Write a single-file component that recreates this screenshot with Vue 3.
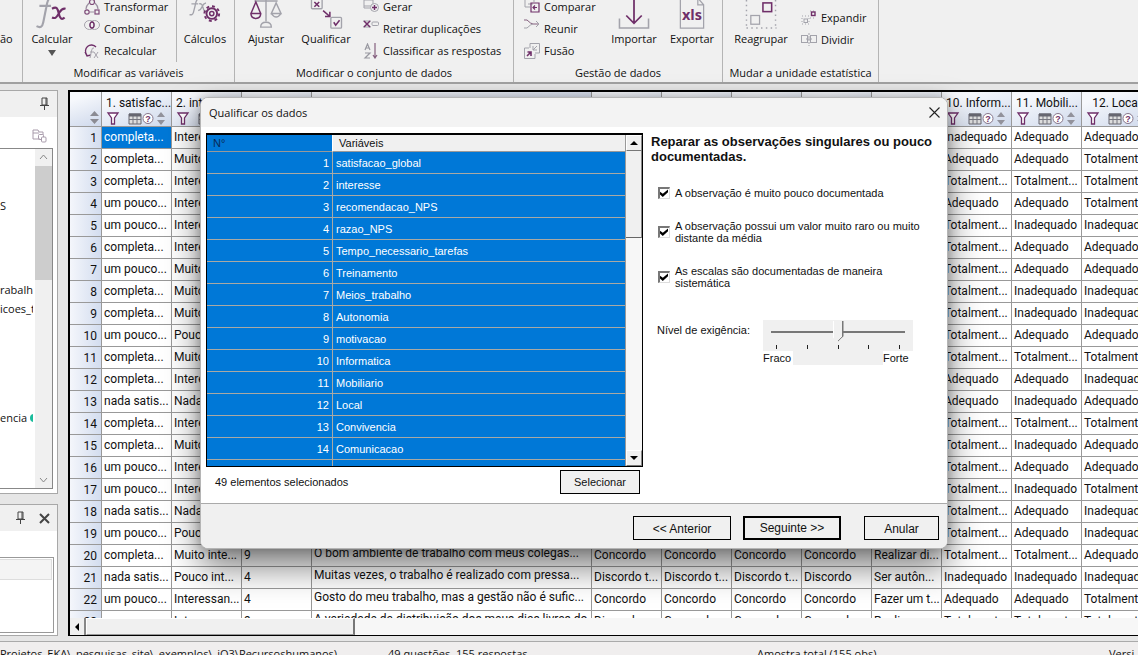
<script setup>
import { ref } from 'vue'

const I = 'Inadequado'
const A = 'Adequado'
const T = 'Totalment...'
const full = 'completa...'
const some = 'um pouco...'
const none = 'nada satis...'
const very = 'Muito inte...'
const int = 'Interessan...'
const little = 'Pouco int...'
const nil = 'Nada inter...'

const columns = [
  { title: '1. satisfac...', w: 'std' },
  { title: '2. interesse', w: 'std' },
  { title: '3. recom...', w: 'std' },
  { title: '4. razao_NPS', w: 'wide' },
  { title: '5. Tempo...', w: 'std' },
  { title: '6. Treina...', w: 'std' },
  { title: '7. Meios...', w: 'std' },
  { title: '8. Auton...', w: 'std' },
  { title: '9. motiva...', w: 'std' },
  { title: '10. Inform...', w: 'std' },
  { title: '11. Mobili...', w: 'std' },
  { title: '12. Local', w: 'std' }
]

const mid = ['', '', '', '', '', '', '']
const C = 'Concordo'
const rows = [
  [full, int, ...mid, I, A, A],
  [full, very, ...mid, A, A, T],
  [full, int, ...mid, T, T, T],
  [some, int, ...mid, A, A, T],
  [some, int, ...mid, T, I, I],
  [full, int, ...mid, T, A, A],
  [some, very, ...mid, T, A, A],
  [full, very, ...mid, T, I, I],
  [full, very, ...mid, T, I, I],
  [some, little, ...mid, T, A, A],
  [full, very, ...mid, T, T, T],
  [full, int, ...mid, A, A, I],
  [none, nil, ...mid, A, I, A],
  [full, int, ...mid, T, T, T],
  [full, very, ...mid, T, I, A],
  [some, int, ...mid, T, A, A],
  [some, int, ...mid, T, I, T],
  [none, nil, ...mid, T, A, I],
  [some, little, ...mid, T, A, I],
  [full, very, '9', 'O bom ambiente de trabalho com meus colegas...', C, C, C, C, 'Realizar di...', T, T, A],
  [none, little, '4', 'Muitas vezes, o trabalho é realizado com pressa...', 'Discordo t...', 'Discordo t...', 'Discordo t...', 'Discordo', 'Ser autôn...', I, I, I],
  [some, int, '4', 'Gosto do meu trabalho, mas a gestão não é sufic...', C, C, C, C, 'Fazer um t...', A, A, T],
  [some, int, '9', 'A variedade da distribuição dos meus dias livres do...', 'Discordo', C, C, C, 'Realizar', T, T, T]
]

const variables = [
  'satisfacao_global', 'interesse', 'recomendacao_NPS', 'razao_NPS', 'Tempo_necessario_tarefas',
  'Treinamento', 'Meios_trabalho', 'Autonomia', 'motivacao', 'Informatica', 'Mobiliario',
  'Local', 'Convivencia', 'Comunicacao', ''
]

const checks = ref([
  { text: 'A observação é muito pouco documentada', on: true },
  { text: 'A observação possui um valor muito raro ou muito distante da média', on: true },
  { text: 'As escalas são documentadas de maneira sistemática', on: true }
])
const level = ref(3)
</script>

<template>
  <div class="app">
    <header class="ribbon">
      <section class="group g-first">
        <div class="tools"><button class="big cut">ão</button></div>
      </section>
      <section class="group g-vars">
        <div class="tools">
          <button class="big w58">
            <svg width="40" height="32" viewBox="0 0 40 32" fill="none">
              <path d="M22-2C16-4 15 2 14 8l-3 15c-1 5-3 6-7 4M7 6h12" stroke="#a3a3ab" stroke-width="2.2" />
              <path d="M20 9c5-3 6 0 7 5s3 7 6 4M34 9c-4-1-5 2-7 5s-3 6-7 4" stroke="#6f2f69" stroke-width="2.2" />
            </svg>
            <span>Calcular</span><i class="caret"></i>
          </button>
          <div class="stack s-vars">
            <button><svg width="16" height="18" viewBox="0 0 16 18" fill="none" stroke="#7d4a78" stroke-width="1.2"><circle cx="8" cy="4" r="2.5" /><circle cx="3" cy="14" r="2.2" /><rect x="11" y="12" width="4" height="4" /><path d="M5 5Q2 8 2 11M11 5q3 3 3 6M6 14h4" stroke="#9b8fa0" /></svg>Transformar</button>
            <button><svg class="up" width="16" height="16" viewBox="0 0 16 16" fill="none"><ellipse cx="5.5" cy="7" rx="5" ry="4.5" stroke="#a6a3ac" /><ellipse cx="10.5" cy="7" rx="5" ry="4.5" stroke="#a6a3ac" /><ellipse cx="8" cy="7" rx="2" ry="3" stroke="#6f2f69" stroke-width="1.3" /></svg>Combinar</button>
            <button><svg width="16" height="16" viewBox="0 0 16 16" fill="none"><path d="M3 12A5.5 5.5 0 1 1 12 4M1 9l2 4 4-1" stroke="#6f2f69" stroke-width="1.3" /><path d="M10 5q-2-1-2.5 3L6 15M6 9h4M10 9l4 6M14 9l-4 6" stroke="#a6a3ac" /></svg>Recalcular</button>
          </div>
          <div class="rule"></div>
          <button class="big w56">
            <svg width="34" height="32" viewBox="0 0 34 32" fill="none">
              <path d="M12-2Q8-2 7 5L5 13q-1 3-4 2M3 4h7M11 4q3-1 4 4t4 3M18 3q-3 1-4 4t-4 4" stroke="#a3a3ab" stroke-width="1.4" />
              <g stroke="#6f2f69"><circle cx="24" cy="14" r="5.5" stroke-width="2" /><circle cx="24" cy="14" r="2.2" stroke-width="1.5" /><circle cx="24" cy="14" r="7.6" stroke-width="2" stroke-dasharray="3 2.97" /></g>
            </svg>
            <span>Cálculos</span>
          </button>
        </div>
        <h2>Modificar as variáveis</h2>
      </section>
      <section class="group g-set">
        <div class="tools">
          <button class="big w62">
            <svg width="34" height="32" viewBox="0 0 34 32" fill="none" stroke="#a3a3ab" stroke-width="1.5">
              <path d="M5 1h24M17 0v22M11.500 28q0-5 5.500-5t5.500 5zM27.500 3l-5 11h10zM22.500 14q5 7 10 0" />
              <path d="M6.500 2l-5 12h10zM1.500 14q0 5 5 5t5-5z" stroke="#6f2f69" />
            </svg>
            <span>Ajustar</span>
          </button>
          <button class="big w58">
            <svg width="34" height="32" viewBox="0 0 34 32" fill="none" stroke="#a3a3ab" stroke-width="1.4">
              <rect x="2" y="-2" width="11" height="11" rx="1" /><rect x="22" y="18" width="11" height="11" rx="1" />
              <path d="M5 2l5 5M10 2l-5 5M14 11l7 6M16 17h5v-5M25 23l2 3 4-5" stroke="#6f2f69" stroke-width="1.6" />
            </svg>
            <span>Qualificar</span>
          </button>
          <div class="stack s-set">
            <button><svg width="16" height="16" viewBox="0 0 16 16" fill="none" stroke="#a3a3ab"><path d="M1 1h9v6H1zM1 7v2h6" /><circle cx="11.5" cy="8.5" r="4" fill="#f0f0f0" /><path d="M9 8.500h5M11.500 6v5" stroke="#6f2f69" stroke-width="1.4" /></svg>Gerar</button>
            <button><svg class="up" width="16" height="16" viewBox="0 0 16 16" fill="none"><path d="M0 3h8M0 9h8" stroke="#a3a3ab" /><path d="M1 3l6 6M7 3l-6 6" stroke="#6f2f69" stroke-width="1.5" /><rect x="9" y="4" width="6.5" height="3.5" rx="1" stroke="#a3a3ab" /></svg>Retirar duplicações</button>
            <button><svg width="16" height="16" viewBox="0 0 16 16" fill="none" stroke="#9898a0" stroke-width="1.2"><path d="M2 7l2.500-6L7 7M3 5h3M2 10h5l-5 5h5" /><path d="M12 0v14M10 12l2 3 2-3" stroke="#85607f" /></svg>Classificar as respostas</button>
          </div>
        </div>
        <h2>Modificar o conjunto de dados</h2>
      </section>
      <section class="group g-data">
        <div class="tools">
          <div class="stack s-data">
            <button><svg width="16" height="18" viewBox="0 0 16 18" fill="none" stroke="#a3a3ab"><path d="M6 9H1V1h9v3M4 6h5" /><path d="M7 5h8v9H7zM13 9.500H9M11 7.500l-2 2 2 2" stroke="#6f2f69" stroke-width="1.2" /></svg>Comparar</button>
            <button><svg class="up" width="16" height="16" viewBox="0 0 16 16" fill="none" stroke="#85607f"><path d="M0 2h3q4 4 6 4h6" /><path d="M0 10h3q4-4 6-4M12 3l3 3-3 3" stroke="#a3a3ab" /></svg>Reunir</button>
            <button><svg width="16" height="16" viewBox="0 0 16 16" fill="none" stroke="#a3a3ab"><path d="M6 5V.5h9.500V10H11M11 11v4.500H.5V5H5M13 3L9 7M9 3v4h4" /><path d="M3 13l4-4M3.500 9H7v4" stroke="#6f2f69" stroke-width="1.6" /></svg>Fusão</button>
          </div>
          <button class="big w58">
            <svg width="34" height="32" viewBox="0 0 34 32" fill="none"><path d="M2 19v10h30V19" stroke="#a3a3ab" stroke-width="1.6" /><path d="M17-2v25M9 16l8 8 8-8" stroke="#6f2f69" stroke-width="1.8" /></svg>
            <span>Importar</span>
          </button>
          <button class="big w58">
            <svg width="34" height="32" viewBox="0 0 34 32" fill="none"><path d="M5-2v31h24V5l-6-7M23-2v7h6" stroke="#a3a3ab" stroke-width="1.3" /><text class="xls" x="17" y="21" text-anchor="middle">xls</text></svg>
            <span>Exportar</span>
          </button>
        </div>
        <h2>Gestão de dados</h2>
      </section>
      <section class="group g-unit">
        <div class="tools">
          <button class="big w76">
            <svg width="34" height="32" viewBox="0 0 34 32" fill="none"><path d="M2 0v29M2 29h31M32 0v29" stroke="#a3a3ab" stroke-width="1.5" stroke-dasharray="1.5 3.5" /><rect x="6.5" y="16" width="9" height="9" stroke="#a3a3ab" stroke-width="1.3" /><rect x="19" y="3" width="9" height="9" stroke="#6f2f69" stroke-width="1.6" /></svg>
            <span>Reagrupar</span>
          </button>
          <div class="stack s-unit">
            <button><svg width="16" height="16" viewBox="0 0 16 16" fill="none" stroke="#a3a3ab"><path d="M1 6h7M1 14h7M1 8v6M8 8v6M9 1h6M9 8h6" stroke-dasharray="1 2" /><rect x="3" y="9" width="3.5" height="3.5" /><rect x="10.5" y="2" width="3.5" height="3.5" stroke="#6f2f69" stroke-width="1.4" /></svg>Expandir</button>
            <button><svg width="16" height="16" viewBox="0 0 16 16" fill="none" stroke="#a3a3ab"><rect x="0.5" y="3.5" width="6" height="7" /><rect x="9.5" y="3.5" width="6" height="7" /><path d="M8 1v13" stroke-dasharray="2 1" /><path d="M5 7h6" /></svg>Dividir</button>
          </div>
        </div>
        <h2>Mudar a unidade estatística</h2>
      </section>
    </header>

    <main class="work">
      <aside class="side">
        <section class="panel p-top">
          <div class="p-head">
            <svg width="11" height="14" viewBox="0 0 11 14" fill="none" stroke="#444"><path d="M3 1h5v7H3zM7 1v7M1 8.500h9M5.500 9v4" /></svg>
          </div>
          <div class="p-tools">
            <svg width="15" height="14" viewBox="0 0 15 14" fill="none" stroke="#a89bab"><path d="M8 10H1V1h5l1 2h4v3M1 4h6" /><rect x="6.5" y="5.5" width="5" height="5" rx="1" /><rect x="9.5" y="8" width="4.5" height="5" rx="1" fill="#fff" /></svg>
          </div>
          <div class="tree">
            <ul>
              <li class="a">S</li><li class="b">rabalho</li><li class="c">icoes_trab</li><li class="d">encia <i></i></li>
            </ul>
            <div class="vbar">
              <svg width="17" height="17" viewBox="0 0 17 17" fill="none" stroke="#888"><path d="M5 10l3.500-4 3.500 4" /></svg>
              <div class="thumb"></div>
              <svg width="17" height="17" viewBox="0 0 17 17" fill="none" stroke="#888"><path d="M5 7l3.500 4L12 7" /></svg>
            </div>
          </div>
        </section>
        <section class="panel p-bottom">
          <div class="p-head">
            <svg width="11" height="14" viewBox="0 0 11 14" fill="none" stroke="#444"><path d="M3 1h5v7H3zM7 1v7M1 8.500h9M5.500 9v4" /></svg>
            <svg width="11" height="11" viewBox="0 0 11 11" fill="none" stroke="#444" stroke-width="2"><path d="M1 1l9 9M10 1l-9 9" /></svg>
          </div>
          <div class="box"><div></div></div>
        </section>
      </aside>

      <section class="grid">
        <div class="viewport">
          <table>
            <colgroup>
              <col class="num"><col v-for="c in columns" :key="c.title" :class="c.w">
            </colgroup>
            <thead>
              <tr>
                <th class="corner"><svg width="9" height="13" viewBox="0 0 9 13" fill="#8b8b93"><path d="M0 5l4.500-5L9 5zM0 8h9l-4.500 5z" /></svg></th>
                <th v-for="c in columns" :key="c.title">
                  <div class="t">{{ c.title }}</div>
                  <svg width="62" height="13" viewBox="0 0 62 13" fill="none">
                    <path d="M2 1h10L8.500 6v6h-3V6z" fill="#fff" stroke="#6f2f69" stroke-width="1.3" />
                    <path d="M23 2h12v10H23z" fill="#ddd" stroke="#666670" /><path d="M23 7.500h12M27 4v8M31 4v8" stroke="#777780" /><path d="M23 3h12" stroke="#666670" stroke-width="3" />
                    <circle cx="42" cy="6.5" r="5" fill="#fff" stroke="#85758a" /><text class="q" x="42" y="10" text-anchor="middle">?</text>
                    <path d="M51 5l4-5 4 5zM51 8h8l-4 5z" fill="#92929c" />
                  </svg>
                </th>
              </tr>
            </thead>
            <tbody>
              <tr v-for="(r, n) in rows" :key="n">
                <th>{{ n + 1 }}</th>
                <td v-for="(v, k) in r" :key="k" :class="{ sel: n === 0 && k === 0, long: k === 3 }">{{ v }}</td>
              </tr>
            </tbody>
          </table>
        </div>
        <div class="hbar"><button aria-label="Rolar à esquerda"><i></i></button><div class="hthumb"></div></div>
      </section>

      <section class="dialog" role="dialog" aria-label="Qualificar os dados">
        <div class="title">
          <h1>Qualificar os dados</h1>
          <button aria-label="Fechar"><svg width="11" height="11" viewBox="0 0 11 11" stroke="#222" stroke-width="1.1"><path d="M0.500 0.500l10 10M10.500 0.500l-10 10" /></svg></button>
        </div>
        <div class="body">
          <div class="left">
            <div class="list">
              <div class="scroll">
                <table>
                  <colgroup><col class="n"><col></colgroup>
                  <thead><tr><th class="on">N°</th><th>Variáveis</th></tr></thead>
                  <tbody>
                    <tr v-for="(v, n) in variables" :key="n"><td class="r">{{ v ? n + 1 : '' }}</td><td>{{ v }}</td></tr>
                  </tbody>
                </table>
              </div>
              <div class="classic">
                <button class="up-btn" aria-label="Subir"><i></i></button>
                <div class="cthumb"></div>
                <button class="down-btn" aria-label="Descer"><i></i></button>
              </div>
            </div>
            <div class="below"><span>49 elementos selecionados</span><button class="btn">Selecionar</button></div>
          </div>
          <div class="right">
            <h3>Reparar as observações singulares ou pouco documentadas.</h3>
            <div class="checks">
              <label v-for="c in checks" :key="c.text"><input v-model="c.on" type="checkbox"><span>{{ c.text }}</span></label>
            </div>
            <div class="level">
              <label for="level">Nível de exigência:</label>
              <div class="slider">
                <input id="level" v-model="level" type="range" min="1" max="5">
                <div class="ticks"><i></i><i></i><i></i><i></i><i></i></div>
                <div class="ends"><span>Fraco</span><span>Forte</span></div>
              </div>
            </div>
          </div>
        </div>
        <footer>
          <button class="btn">&lt;&lt; Anterior</button>
          <button class="btn main">Seguinte &gt;&gt;</button>
          <button class="btn last">Anular</button>
        </footer>
      </section>
    </main>

    <div class="status">
      <span>Projetos_EKA\_pesquisas_site\_exemplos\_iQ3\Recursoshumanos)</span>
      <span>49 questões, 155 respostas</span>
      <span>Amostra total (155 obs)</span>
      <span>Versi</span>
    </div>
  </div>
</template>

<style>
html, body { background: #fff; overflow: hidden; }
</style>

<style scoped>
* { box-sizing: border-box; }
h1, h2, h3, ul { margin: 0; padding: 0; font-weight: 400; }
button { font: inherit; color: inherit; background: none; border: 0; padding: 0; }
svg { flex: none; display: block; }
.app {
  height: calc(100vh - 12px);
  display: flex;
  flex-direction: column;
  overflow: hidden;
  background: #e6e6e6;
  color: #111;
  font: 11px/16px "Open Sans", "Noto Sans", sans-serif;
}

.ribbon { flex: none; height: 84px; display: flex; overflow: hidden; background: #f0f0f0; border-bottom: 2px solid #a0a0a0; }
.group { flex: none; display: flex; flex-direction: column; border-right: 1px solid #b4b4b4; white-space: nowrap; }
.g-first { width: 23px; }
.g-vars { width: 212px; }
.g-set { width: 279px; }
.g-data { width: 209px; }
.g-unit { width: 156px; }
.group h2 { height: 20px; line-height: 22px; font-size: 11px; text-align: center; }
.tools { height: 62px; display: flex; align-items: flex-end; }
.big { flex: none; display: flex; flex-direction: column; align-items: center; height: 62px; line-height: 16px; }
.big svg { height: 31px; }
.cut { padding-top: 31px; }
.w56 { width: 56px; }
.w58 { width: 58px; }
.w62 { width: 62px; }
.w76 { width: 76px; }
.caret { margin-top: 3px; border: 4px solid transparent; border-top: 6px solid #555; border-bottom: 0; }
.stack { display: flex; flex-direction: column; }
.stack button { height: 22px; display: flex; align-items: center; gap: 4px; }
.up { align-self: flex-start; }
.s-vars { width: 95px; padding-left: 3px; }
.s-set { padding-left: 8px; }
.s-data { width: 91px; padding-left: 10px; }
.s-unit { padding: 0 0 11px 2px; }
.rule { width: 1px; height: 62px; background: #b4b4b4; }
.xls { font: 700 15px "Open Sans", sans-serif; fill: #6f2f69; }

.work { position: relative; flex: 1; min-height: 0; display: flex; gap: 10px; padding: 6px 0 5px; }
.side { flex: none; width: 58px; display: flex; flex-direction: column; gap: 10px; }
.panel { background: #fff; border: 1px solid #a8a8a8; border-left: 0; display: flex; flex-direction: column; }
.p-top { flex: 3; padding-bottom: 4px; }
.p-bottom { flex: none; height: 132px; padding-bottom: 2px; }
.p-head { height: 26px; flex: none; background: #f0f0f0; display: flex; align-items: center; justify-content: flex-end; gap: 13px; padding-right: 7px; }
.p-tools { height: 31px; flex: none; display: flex; align-items: center; justify-content: flex-end; padding: 6px 10px 0 0; }
.tree { flex: 1; display: flex; justify-content: space-between; margin-right: 4px; border: 1px solid #888; border-left: 0; }
.tree ul { width: 33px; overflow: hidden; list-style: none; white-space: nowrap; }
.tree li { height: 19px; line-height: 19px; }
.tree .a { margin-top: 47px; }
.tree .b { margin-top: 65px; }
.tree .d { margin-top: 90px; }
.tree i { display: inline-block; width: 8px; height: 8px; border-radius: 4px; background: #1abc9c; }
.vbar { width: 17px; background: #f0f0f0; display: flex; flex-direction: column; }
.vbar .thumb { height: 114px; margin-bottom: auto; background: #cdcdcd; }
.box { flex: 1; margin: 26px 3px 0 0; padding: 1px 1px 0 0; border: 1px solid #999; border-left: 0; }
.box div { height: 21px; background: #f4f4f4; border: 1px solid #ddd; border-left: 0; }

.grid { flex: 1; min-width: 0; display: flex; flex-direction: column; border: solid #000; border-width: 2px 0 1px 2px; background: #fff; }
.viewport { flex: 1; min-height: 0; overflow: hidden; }
.grid table { table-layout: fixed; width: 1082px; border-collapse: separate; border-spacing: 0; font: 12px/16px Roboto, "Open Sans", sans-serif; }
.num { width: 32px; }
.std { width: 70px; }
.wide { width: 280px; }
.grid th, .grid td { overflow: hidden; white-space: nowrap; padding: 0 0 0 2px; border-right: 1px solid #999; border-bottom: 1px solid #999; font-weight: 400; }
.grid td { height: 22px; line-height: 21px; }
.grid .long { padding-bottom: 4px; line-height: 17px; }
.grid .sel { background: #0078d7; color: #fff; }
.grid thead th { height: 35px; background: linear-gradient(160deg, #f6f8fc 20%, #cfd9ec); padding: 1px 0 0 4px; }
.grid thead .corner { vertical-align: bottom; padding: 0 0 2px 20px; }
.grid .t { height: 18px; line-height: 18px; padding-right: 4px; text-align: center; }
.q { font: 700 9px "Liberation Sans", sans-serif; fill: #6f2f69; }
.grid tbody th { text-align: right; padding-right: 4px; background: linear-gradient(90deg, #f4f6fb, #d3ddef); }
.hbar { flex: none; height: 17px; display: flex; background: #f7f7f7; }
.hbar button { width: 16px; display: flex; align-items: center; justify-content: center; background: #f0f0f0; border-right: 2px solid #888; }
.hbar i { border: 4px solid transparent; border-right: 4px solid #000; border-left: 0; }
.hthumb { width: 269px; background: #f0f0f0; border: 1px solid #fff; border-right: 2px solid #777; border-bottom: 1px solid #999; }

.dialog { position: absolute; left: 200px; right: 190px; top: 13px; display: flex; flex-direction: column; background: #fff; border: 1px solid #b5b5b5; border-radius: 8px; overflow: hidden; box-shadow: 0 18px 34px rgba(0, 0, 0, 0.5), 0 0 12px rgba(0, 0, 0, 0.25); font: 11px/12px "Liberation Sans", Arial, sans-serif; }
.title { height: 29px; display: flex; align-items: center; justify-content: space-between; padding: 0 7px 0 8px; background: #f3f3f3; }
.title h1 { font: 11px/16px "Open Sans", "Noto Sans", sans-serif; }
.body { display: flex; gap: 8px; padding: 6px 6px 9px 5px; border-bottom: 1px solid #aaa; }
.left { flex: none; width: 437px; }
.list { height: 334px; display: flex; border: 1px solid #000; border-top-width: 2px; }
.scroll { flex: 1; overflow: hidden; background: #0078d7; }
.list table { width: 100%; table-layout: fixed; border-collapse: separate; border-spacing: 0; }
.list .n { width: 126px; }
.list th { height: 17px; padding: 0 0 0 6px; background: #f0f0f0; text-align: left; font-weight: 400; border-bottom: 1px solid #999; }
.list .on { background: #0078d7; color: #0a2a55; border-right: 1px solid #fff; }
.list td { height: 22px; padding: 0 0 0 3px; color: #fff; border-bottom: 1px solid #a9a9a4; }
.list .r { text-align: right; padding-right: 3px; border-right: 1px solid #a9a9a4; }
.classic { width: 17px; display: flex; flex-direction: column; background: #f7f7f7; border-left: 1px solid #999; }
.classic button { height: 16px; display: flex; align-items: center; justify-content: center; background: #f0f0f0; border: 1px solid #fff; border-right-color: #888; border-bottom-color: #777; }
.classic i { border: 4px solid transparent; }
.up-btn i { border-bottom-color: #000; border-top: 0; }
.down-btn i { border-top-color: #000; border-bottom: 0; }
.cthumb { height: 87px; margin-bottom: auto; background: #f0f0f0; border-right: 1px solid #888; border-bottom: 1px solid #666; }
.below { display: flex; justify-content: space-between; align-items: center; margin-top: 3px; padding: 0 3px 0 9px; }
.btn { width: 80px; height: 24px; border: 1px solid #000; background: #f0f0f0; }
.right { flex: 1; padding-top: 1px; }
.right h3 { font-size: 13px; line-height: 15px; font-weight: 700; }
.checks { display: flex; flex-direction: column; gap: 21px; padding: 23px 0 0 7px; }
.checks label { display: flex; align-items: center; gap: 5px; max-width: 276px; }
.checks input { flex: none; appearance: none; width: 12px; height: 12px; margin: 0; background: #fff; border: solid; border-width: 2px 1px 1px 2px; border-color: #777 #ddd #ddd #777; }
.checks input:checked::before { content: ""; display: block; width: 8px; height: 8px; background: #000; clip-path: polygon(0 35%, 35% 60%, 100% 5%, 100% 40%, 35% 100%, 0 70%); }
.level { display: flex; gap: 10px; padding: 31px 0 0 6px; }
.level label { padding-top: 4px; width: 96px; white-space: nowrap; }
.slider { width: 150px; background: #f0f0f0; }
.slider input { appearance: none; display: block; width: 134px; height: 23px; margin: 0 8px; background: linear-gradient(#777, #777) 0 11px / 100% 2px no-repeat; }
.slider input::-webkit-slider-thumb {
  appearance: none;
  width: 11px;
  height: 21px;
  background:
    linear-gradient(135deg, transparent 38%, #777 38%) 100% 100% / 6px 6px no-repeat,
    linear-gradient(90deg, #fff 1px, #f0f0f0 1px 9px, #777 9px);
  clip-path: polygon(0 0, 11px 0, 11px 15px, 5px 21px, 0 16px);
}
.ticks { display: flex; justify-content: space-between; padding: 2px 13px 0; height: 8px; }
.ticks i { width: 1px; height: 4px; background: #222; }
.ends { display: flex; justify-content: space-between; line-height: 14px; }
.ends span { background: #fff; width: 30px; }
.dialog footer { display: flex; justify-content: flex-end; gap: 12px; padding: 12px 8px 8px; background: #f0f0f0; }
.dialog footer .btn { width: 98px; font-size: 12px; line-height: 20px; padding-top: 1px; }
.dialog footer .main { border-width: 2px; padding-top: 0; }
.dialog footer .last { width: 75px; margin-left: 11px; }

.status { flex: none; height: 14px; overflow: hidden; display: grid; grid-template-columns: 388fr 369fr 352fr 29fr; padding-top: 4px; border-top: 1px solid #aaa; background: #f0eeee; white-space: nowrap; }
.status span { min-width: 0; }
</style>
